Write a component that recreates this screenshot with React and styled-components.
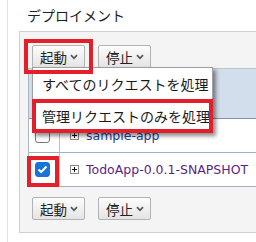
import React from "react";
import styled, { createGlobalStyle } from "styled-components";

const GlobalStyle = createGlobalStyle`
  html, body {
    margin: 0;
    padding: 0;
    background: #fff;
    overflow: hidden;
  }
  body {
    font-family: "Noto Sans CJK JP", "DejaVu Sans", sans-serif;
    color: #222;
  }
`;

// page column with the thin rule on the left
const Page = styled.div`
  margin-left: 7px;
  border-left: 1px solid #e0e0e0;
  min-height: 242px;
  padding-left: 11px;
  overflow: hidden;
`;

const Title = styled.h2`
  margin: 0;
  height: 31px;
  box-sizing: border-box;
  padding: 5px 0 0 8px;
  font-size: 14px;
  font-weight: normal;
  line-height: 20px;
  color: #1e1e1e;
`;

const Panel = styled.section`
  border: 1px solid #d0d0d0;
  border-right: none;
  background: #f4f4f4;
  padding: 13px 0 12px 8px;
`;

const Toolbar = styled.div`
  display: flex;
  gap: 13px;
  padding-left: 4px;
  margin-top: ${({ $bottom }) => ($bottom ? "10px" : "0")};
`;

const Dropdown = styled.div`
  position: relative;
  display: flex;
`;

const Button = styled.button`
  height: 23px;
  box-sizing: border-box;
  display: flex;
  align-items: center;
  gap: 3px;
  padding: 0 6px 0 7px;
  border: 1px solid #b3b3b3;
  border-radius: 2px;
  background: linear-gradient(#fdfdfd, #e4e4e4);
  font-family: "Noto Sans CJK JP", sans-serif;
  font-size: 13.5px;
  color: #222;
`;

const Menu = styled.ul`
  position: absolute;
  top: 22px;
  left: 0;
  width: 181px;
  box-sizing: border-box;
  margin: 0;
  padding: 0;
  list-style: none;
  background: #fff;
  border: 1px solid #a0a0a0;
  box-shadow: 3px 3px 4px rgba(0, 0, 0, 0.45);
  z-index: 5;
`;

const MenuItem = styled.li`
  position: relative;
  height: 32px;
  display: flex;
  align-items: center;
  padding-left: 9px;
  font-size: 14px;
  color: #1a1a1a;
  white-space: nowrap;
`;

// red annotation frame drawn over the UI
const Highlight = styled.span`
  position: absolute;
  top: ${({ $t }) => $t}px;
  right: ${({ $r }) => $r}px;
  bottom: ${({ $b }) => $b}px;
  left: ${({ $l }) => $l}px;
  border: 4px solid #e3202a;
  pointer-events: none;
  z-index: 10;
`;

const Table = styled.div`
  border-left: 1px solid #a9b7c7;
  border-top: 1px solid #b9c6d5;
`;

const HeaderRow = styled.div`
  height: 49px;
  background: #d3deec;
  border-bottom: 1px solid #7f93aa;
`;

const Row = styled.div`
  display: grid;
  grid-template-columns: 31px 1fr;
  height: 34px;
  box-sizing: border-box;
  background: #fff;
  border-bottom: 1px solid #9fb0c4;
`;

const CheckCell = styled.div`
  position: relative;
  display: flex;
  align-items: center;
  padding-left: 6px;
  border-right: 1px solid #b8c4d2;
`;

const Check = styled.span`
  width: 15px;
  height: 15px;
  box-sizing: border-box;
  border-radius: 3px;
  display: flex;
  align-items: center;
  justify-content: center;
  background: ${({ $on }) => ($on ? "#1a73d9" : "#fff")};
  border: 1px solid ${({ $on }) => ($on ? "#1a73d9" : "#7a7a7a")};
`;

const NameCell = styled.div`
  display: flex;
  align-items: center;
  gap: 7px;
  padding-left: 10px;
  overflow: hidden;
`;

const Expander = styled.span`
  flex: none;
  width: 9px;
  height: 9px;
  box-sizing: border-box;
  border: 1px solid #8a8a8a;
  background: #fff;
  display: flex;
  align-items: center;
  justify-content: center;
`;

const AppLink = styled.a`
  font-family: "DejaVu Sans", sans-serif;
  font-size: 12.5px;
  color: ${({ $visited }) => ($visited ? "#5b1f7f" : "#23429a")};
  text-decoration: none;
  white-space: nowrap;
`;

const Chevron = () => (
  <svg width="8" height="6" viewBox="0 0 8 6">
    <polyline points="1,1.2 4,4.3 7,1.2" fill="none" stroke="#555" strokeWidth="1.7" />
  </svg>
);

const Plus = () => (
  <svg width="7" height="7" viewBox="0 0 7 7">
    <path d="M1 3.5h5M3.5 1v5" stroke="#111" strokeWidth="1" />
  </svg>
);

const Tick = () => (
  <svg width="11" height="9" viewBox="0 0 11 9">
    <polyline points="1.5,4.5 4.2,7 9.5,1.5" fill="none" stroke="#fff" strokeWidth="2" />
  </svg>
);

const apps = [
  { name: "sample-app", checked: false },
  { name: "TodoApp-0.0.1-SNAPSHOT", checked: true, visited: true },
];

export default function App() {
  return (
    <>
      <GlobalStyle />
      <Page>
        <Title>デプロイメント</Title>
        <Panel>
          <Toolbar>
            <Dropdown>
              <Button>
                <span>起動</span>
                <Chevron />
              </Button>
              <Highlight $t={-6} $r={-8} $b={-6} $l={-8} />
              <Menu>
                <MenuItem>すべてのリクエストを処理</MenuItem>
                <MenuItem>
                  管理リクエストのみを処理
                  <Highlight $t={-1} $r={-1} $b={-1} $l={-1} />
                </MenuItem>
              </Menu>
            </Dropdown>
            <Button>
              <span>停止</span>
              <Chevron />
            </Button>
          </Toolbar>
          <Table>
            <HeaderRow />
            {apps.map((app) => (
              <Row key={app.name}>
                <CheckCell>
                  <Check $on={app.checked}>{app.checked && <Tick />}</Check>
                  {app.checked && <Highlight $t={3} $r={0} $b={-1} $l={-2} />}
                </CheckCell>
                <NameCell>
                  <Expander>
                    <Plus />
                  </Expander>
                  <AppLink href="#" $visited={app.visited}>
                    {app.name}
                  </AppLink>
                </NameCell>
              </Row>
            ))}
          </Table>
          <Toolbar $bottom>
            <Button>
              <span>起動</span>
              <Chevron />
            </Button>
            <Button>
              <span>停止</span>
              <Chevron />
            </Button>
          </Toolbar>
        </Panel>
      </Page>
    </>
  );
}
